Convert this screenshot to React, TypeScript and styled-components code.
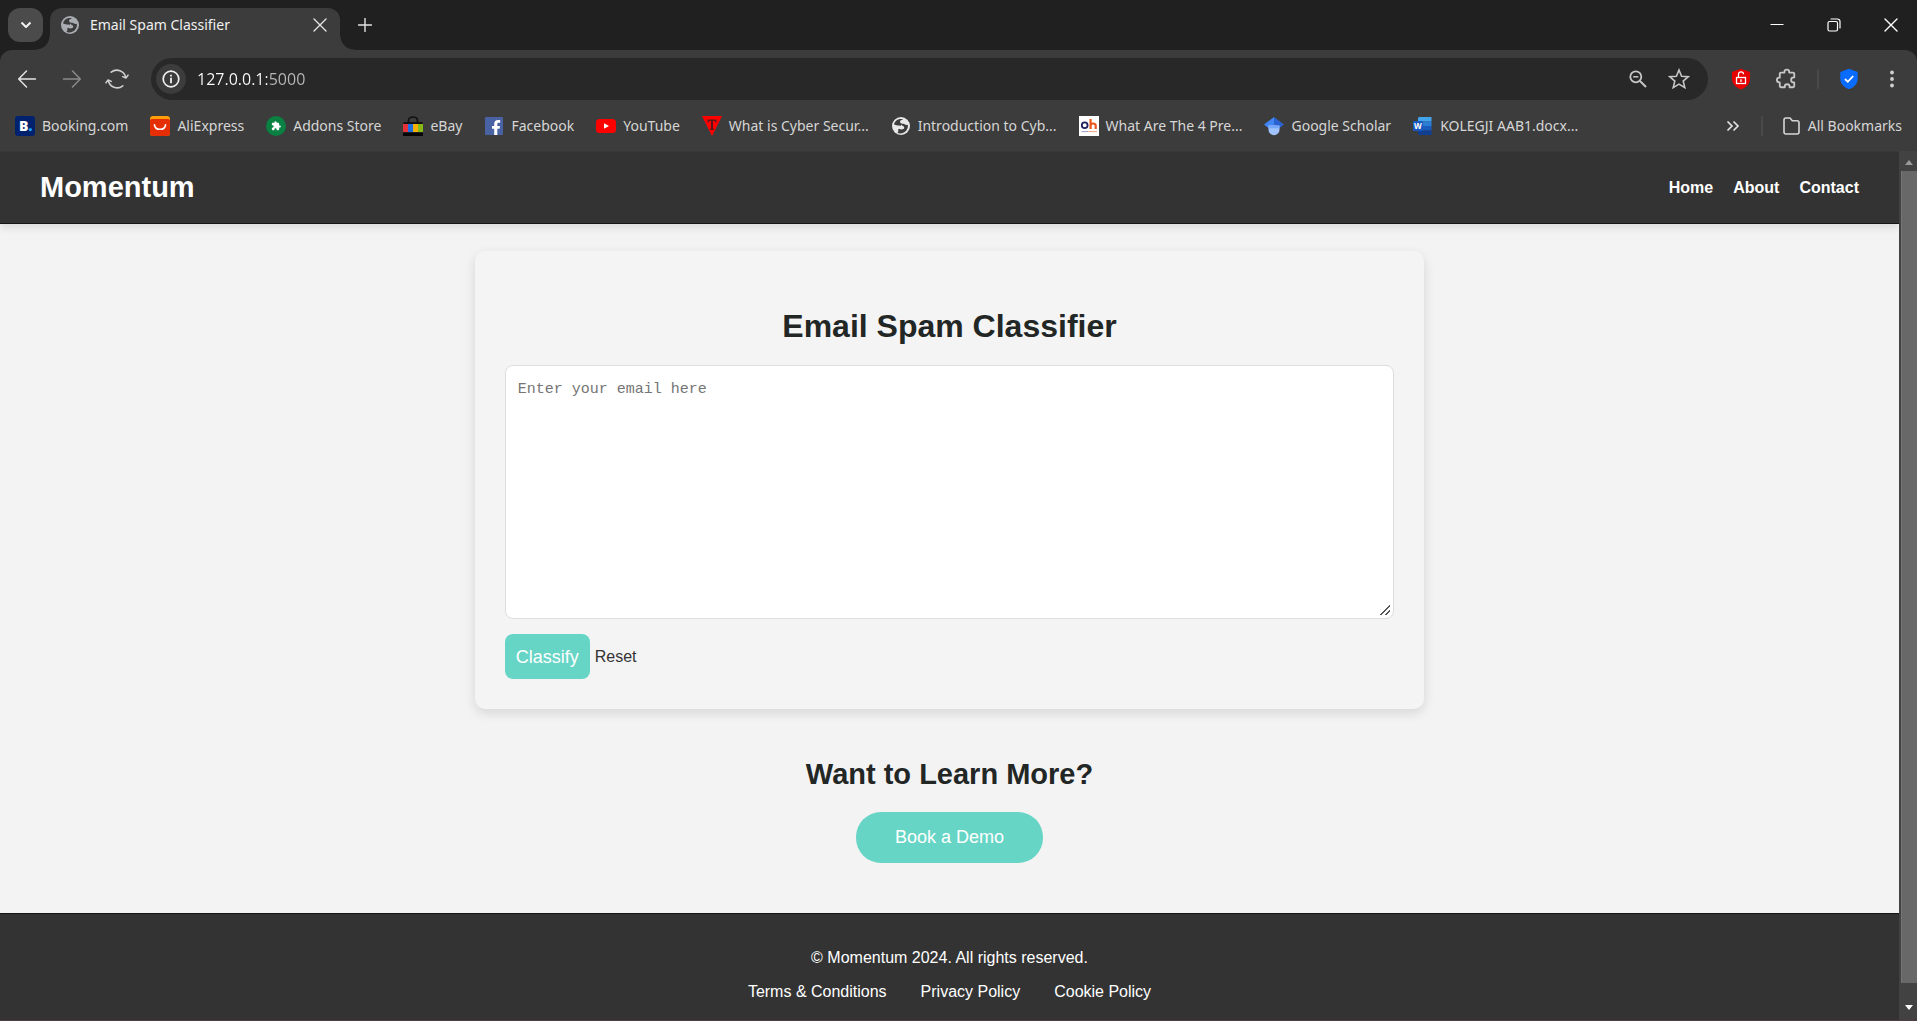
import React from "react";
import styled, { createGlobalStyle } from "styled-components";

const UI_FONT = `"Noto Sans", "Open Sans", sans-serif`;
const PAGE_FONT = `"Liberation Sans", Arial, sans-serif`;

const GlobalStyle = createGlobalStyle`
  *, *::before, *::after { box-sizing: border-box; }
  body { margin: 0; background: #202020; }
  button, input, textarea { margin: 0; }
  a { color: inherit; text-decoration: none; }
  svg { display: block; flex: none; }
`;

/* ---------- browser frame ---------- */

const Window = styled.div`
  height: 100vh;
  display: flex;
  flex-direction: column;
  background: #202020;
  border-bottom: 1px solid #513c41;
  font-family: ${UI_FONT};
  overflow: hidden;
`;

const TabStrip = styled.div`
  flex: none;
  height: 50px;
  padding: 8px 0 0 8px;
  display: flex;
  align-items: flex-start;
`;

const TabSearch = styled.button`
  width: 35px;
  height: 34px;
  padding: 0;
  border: 0;
  border-radius: 12px;
  background: #4b4b4b;
  color: #f2f2f2;
  display: grid;
  place-items: center;
`;

const Tab = styled.div`
  position: relative;
  width: 290px;
  height: 42px;
  margin-left: 7px;
  padding: 0 12px 8px 10px;
  border-radius: 12px 12px 0 0;
  background: #3c3c3c;
  color: #f0f0f0;
  display: flex;
  align-items: center;
  gap: 10px;

  &::before,
  &::after {
    content: "";
    position: absolute;
    bottom: 0;
    width: 14px;
    height: 14px;
  }
  &::before {
    right: 100%;
    background: radial-gradient(circle at 0 0, transparent 13px, #3c3c3c 14px);
  }
  &::after {
    left: 100%;
    background: radial-gradient(circle at 100% 0, transparent 13px, #3c3c3c 14px);
  }
`;

const TabTitle = styled.span`
  flex: 1;
  font-size: 14px;
  line-height: 20px;
  white-space: nowrap;
`;

const FlatButton = styled.button<{ $width: number; $tone?: string }>`
  flex: none;
  width: ${(p) => p.$width}px;
  height: 34px;
  padding: 0;
  border: 0;
  background: transparent;
  color: ${(p) => p.$tone ?? "#e3e3e3"};
  display: grid;
  place-items: center;
`;

const WindowControls = styled.div`
  margin-left: auto;
  display: flex;
  gap: 5px;
`;

const Toolbar = styled.div`
  flex: none;
  height: 58px;
  padding: 0 8px;
  border-radius: 12px 12px 0 0;
  background: #3c3c3c;
  display: flex;
  align-items: center;
`;

const NavButtons = styled.div`
  display: flex;
  gap: 7px;
`;

const Omnibox = styled.div`
  flex: 1;
  height: 42px;
  margin: 0 14px 0 15px;
  padding: 0 10px 0 5px;
  border-radius: 21px;
  background: #282828;
  display: flex;
  align-items: center;
  gap: 3px;
`;

const SiteInfo = styled.button`
  width: 30px;
  height: 30px;
  padding: 0;
  border: 0;
  border-radius: 50%;
  background: #3c3c3c;
  color: #f0f0f0;
  display: grid;
  place-items: center;
`;

const Address = styled.input`
  flex: 1;
  min-width: 0;
  padding: 0 8px;
  border: 0;
  outline: 0;
  background: linear-gradient(90deg, #ffffff 78px, #b9b9b9 78px);
  background-clip: text;
  -webkit-background-clip: text;
  -webkit-text-fill-color: transparent;
  color: #ffffff;
  font-family: "Open Sans", "Noto Sans", sans-serif;
  font-size: 16px;
  line-height: 24px;
`;

const Extensions = styled.div`
  display: flex;
  align-items: center;
  gap: 7px;
`;

const Divider = styled.span<{ $after?: number }>`
  width: 2px;
  height: 20px;
  margin: 0 ${(p) => p.$after ?? 4}px 0 5px;
  border-radius: 1px;
  background: #4a4a4a;
`;

const BookmarksBar = styled.nav`
  flex: none;
  height: 43px;
  padding: 0 15px 8px;
  background: #3c3c3c;
  color: #d6d6d6;
  display: flex;
  align-items: center;
`;

const BookmarkList = styled.div`
  display: flex;
  gap: 22px;
`;

const Bookmark = styled.a`
  display: flex;
  align-items: center;
  gap: 7px;
  font-size: 14px;
  line-height: 20px;
  white-space: nowrap;
`;

const BookmarkTail = styled.div`
  margin-left: auto;
  display: flex;
  align-items: center;
  gap: 9px;
`;

/* ---------- web page ---------- */

const Viewport = styled.div`
  flex: 1;
  min-height: 0;
  display: flex;
`;

const Page = styled.div`
  flex: 1;
  min-width: 0;
  overflow: hidden;
  background: #f3f3f3;
  color: #333333;
  font-family: ${PAGE_FONT};
  font-size: 16px;
  line-height: 18px;
`;

const SiteHeader = styled.header`
  height: 73px;
  padding: 0 40px;
  border-top: 1px solid #383838;
  border-bottom: 1px solid #161616;
  background: #333333;
  box-shadow: 0 4px 8px rgba(0, 0, 0, 0.1);
  color: #ffffff;
  display: flex;
  align-items: center;
  justify-content: space-between;
`;

const Brand = styled.a`
  font-size: 29px;
  line-height: 34px;
  font-weight: 700;
  padding-bottom: 2px;
`;

const SiteNav = styled.nav`
  display: flex;
  gap: 20px;
  font-weight: 700;
`;

const Card = styled.main`
  width: 50%;
  margin: 27px auto 0;
  padding: 30px;
  border-radius: 10px;
  background: #f4f4f4;
  box-shadow: 0 4px 12px rgba(0, 0, 0, 0.12);
`;

const CardTitle = styled.h1`
  margin: 27px 0 20px;
  color: #222625;
  font-size: 32px;
  line-height: 37px;
  font-weight: 700;
  text-align: center;
`;

const EmailBox = styled.textarea`
  display: block;
  width: 100%;
  height: 254px;
  padding: 14px 12px;
  border: 1px solid #dddddd;
  border-radius: 8px;
  background: #ffffff;
  color: #333333;
  font-family: "Liberation Mono", monospace;
  font-size: 15px;
  line-height: 20px;
  resize: vertical;

  &::placeholder {
    color: #757575;
  }
  &::-webkit-resizer {
    background: linear-gradient(
        135deg,
        transparent 46%,
        #555555 46%,
        #555555 55%,
        transparent 55%,
        transparent 73%,
        #555555 73%,
        #555555 82%,
        transparent 82%
      )
      2px 2px / 10px 10px no-repeat;
  }
`;

const Actions = styled.div`
  margin-top: 15px;
  display: flex;
  align-items: center;
  gap: 5px;
`;

const ClassifyButton = styled.button`
  height: 45px;
  padding: 0 11px;
  border: 0;
  border-radius: 8px;
  background: #66d5c5;
  color: #ffffff;
  font-family: ${PAGE_FONT};
  font-size: 18px;
  line-height: 20px;
`;

const LearnMore = styled.section`
  padding: 49px 20px 50px;
  display: flex;
  flex-direction: column;
  align-items: center;
  gap: 21px;
`;

const LearnTitle = styled.h2`
  margin: 0;
  color: #222625;
  font-size: 29px;
  line-height: 33px;
  font-weight: 700;
`;

const DemoLink = styled.a`
  padding: 15px 39px;
  border-radius: 25px;
  background: #66d5c5;
  color: #ffffff;
  font-size: 18px;
  line-height: 21px;
`;

const SiteFooter = styled.footer`
  padding: 35px 20px 30px;
  border-top: 1px solid #161616;
  background: #333333;
  color: #ffffff;
  display: flex;
  flex-direction: column;
  align-items: center;
  gap: 16px;
`;

const Copyright = styled.p`
  margin: 0;
`;

const FooterLinks = styled.div`
  display: flex;
  gap: 34px;
`;

const ScrollTrack = styled.div`
  flex: none;
  width: 18px;
  padding-left: 2px;
  background: #424242;
  display: flex;
  flex-direction: column;
`;

const ScrollArrow = styled.span<{ $height: number; $inset: number }>`
  height: ${(p) => p.$height}px;
  padding-top: ${(p) => p.$inset}px;
  color: #9a9a9a;
  display: grid;
  place-items: center;
`;

const ScrollThumb = styled.div`
  flex: 1;
  border-left: 1px solid #757575;
  background: #686868;
`;

/* ---------- icons ---------- */

const line = { fill: "none", stroke: "currentColor", strokeLinecap: "round", strokeLinejoin: "round" } as const;

const GlobeIcon = ({ tone = "#e8e8e8" }: { tone?: string }) => (
  <svg width="20" height="20" viewBox="0 0 20 20">
    <circle cx="10" cy="10" r="9" fill={tone} />
    <path
      d="M11.500 3.200C7.500 2.200 4 4.600 3 8.300c1.200.8 2.400 1.200 4.200 1.100 1.800 0 2.900.5 3 1.800 0 1.100-.6 1.600-1.700 1.700l-1.200.1v2.600c0 .8-.5 1.200-1.200 1.100 3.200 1.500 6.600.6 8.800-1.700 1.700-1.900 2.300-4 1.900-6.300-1.100.4-2 .4-2.700-.2-.7-.7-1.300-.8-2.500-.8-1.600 0-2.500-.7-2.500-1.900 0-1 .6-1.600 1.700-1.800.8-.1 1-.4.7-.8z"
      fill="#3c3c3c"
    />
    <path d="M10.500 8.500c.6 1.600 2.100 1.300 2.600 2.500.4 1.100-.2 1.900-1.500 2.200l-2.300.4-.8-2.400z" fill={tone} />
  </svg>
);

const BookingIcon = () => (
  <svg width="20" height="20" viewBox="0 0 20 20">
    <rect width="20" height="20" rx="3" fill="#00226e" />
    <text x="4" y="15" fontFamily="Open Sans" fontWeight="800" fontSize="14" fill="#ffffff">B</text>
    <circle cx="15.300" cy="13.600" r="1.600" fill="#18a4f2" />
  </svg>
);

const AliIcon = () => (
  <svg width="20" height="20" viewBox="0 0 20 20">
    <rect width="20" height="20" rx="3" fill="#ff9d0a" />
    <path d="M0 5a2 2 0 0 1 2-2h16a2 2 0 0 1 2 2v12a3 3 0 0 1-3 3H3a3 3 0 0 1-3-3z" fill="#e62e04" />
    <path d="M4.500 8.800c.6 6 10.400 6 11 0" fill="none" stroke="#ffffff" strokeWidth="1.600" strokeLinecap="round" />
  </svg>
);

const PUZZLE =
  "M20.500 11H19V7c0-1.100-.9-2-2-2h-4V3.500a2.500 2.500 0 0 0-5 0V5H4c-1.100 0-2 .9-2 2v3.800h1.500a2.700 2.700 0 0 1 0 5.400H2V20c0 1.100.9 2 2 2h3.800v-1.500a2.700 2.700 0 0 1 5.400 0V22H17c1.100 0 2-.9 2-2v-4h1.500a2.500 2.500 0 0 0 0-5z";

const AddonsIcon = () => (
  <svg width="20" height="20" viewBox="0 0 20 20">
    <circle cx="10" cy="10" r="10" fill="#0b8043" />
    <path d={PUZZLE} fill="#ffffff" transform="translate(5 4.700) scale(.43)" />
  </svg>
);

const EbayIcon = () => (
  <svg width="20" height="20" viewBox="0 0 20 20">
    <path d="M5.500 8V4.500a4.500 3.500 0 0 1 9 0V8" fill="none" stroke="#111111" strokeWidth="1.700" />
    <path d="M1 6h18l1 2H0z" fill="#111111" />
    <path d="M0 8h5v8H0z" fill="#e53238" />
    <path d="M5 8h5v8H5z" fill="#1d6fe0" />
    <path d="M10 8h5v8h-5z" fill="#f5af02" />
    <path d="M15 8h5v8h-5z" fill="#86b817" />
    <path d="M0 16.500h20V20H0z" fill="#050505" />
  </svg>
);

const FacebookIcon = () => (
  <svg width="20" height="20" viewBox="0 0 20 20">
    <rect x="1" y="1" width="18" height="18" rx="1" fill="#4862a3" />
    <path d="M10.200 19v-6.300H8V9.900h2.200V8c0-2.600 1.500-4 3.900-4 .9 0 1.700.1 2.100.2v2.500h-1.500c-1.200 0-1.400.6-1.400 1.500v1.700H16l-.4 2.800h-2.300V19z" fill="#ffffff" />
  </svg>
);

const YoutubeIcon = () => (
  <svg width="20" height="20" viewBox="0 0 20 20">
    <rect y="3" width="20" height="14" rx="3.500" fill="#ff0000" />
    <path d="M8 7.200v5.600l5-2.800z" fill="#ffffff" />
  </svg>
);

const TriangleIcon = () => (
  <svg width="20" height="20" viewBox="0 0 20 20">
    <path d="M0 0h20L10 20z" fill="#ff0000" />
    <path d="M5.500 3.500h9v3h-1l-.5-1.500h-2v7.500l1 .5v1H8v-1l1-.5V5H7l-.5 1.500h-1z" fill="#5c1414" />
  </svg>
);

const OhIcon = () => (
  <svg width="20" height="20" viewBox="0 0 20 20">
    <rect width="20" height="20" fill="#ffffff" />
    <circle cx="5.700" cy="9.300" r="2.900" fill="none" stroke="#1e2160" strokeWidth="1.800" />
    <path d="M11.600 3v10M11.600 9.600c.3-2.600 5.100-3 5.100.2V13" fill="none" stroke="#e8571c" strokeWidth="2.200" />
    <path d="M2.500 15.600h7" stroke="#9a9ac0" strokeWidth="1" />
    <path d="M9.500 15.600H18" stroke="#f0a27c" strokeWidth="1" />
  </svg>
);

const ScholarIcon = () => (
  <svg width="20" height="20" viewBox="0 0 20 20">
    <path d="M10 1 0 8.500 5 12.500l5-2z" fill="#4285f4" />
    <path d="m10 1 10 7.500-5 4-5-2z" fill="#2a62d0" />
    <path d="M4.500 9.500h11v4.200a5.500 5.500 0 0 1-11 0z" fill="#a0c3ff" />
    <path d="M4.500 12.300C5.500 8 14.500 8 15.500 12.300z" fill="#76a7fa" />
  </svg>
);

const WordIcon = () => (
  <svg width="20" height="20" viewBox="0 0 20 20">
    <path d="M6 1h12.500v4.500H5V2z" fill="#41a5ee" />
    <path d="M5 5.500h13.500V10H5z" fill="#2b7cd3" />
    <path d="M5 10h13.500v4.500H5z" fill="#185abd" />
    <path d="M5 14.500h13.500V19H6l-1-1z" fill="#103f91" />
    <rect y="5" width="10" height="10" rx="1" fill="#185abd" />
    <text x="1" y="13" fontFamily="Open Sans" fontWeight="700" fontSize="8" fill="#ffffff">W</text>
  </svg>
);

const ChevronIcon = () => (
  <svg width="14" height="14" viewBox="0 0 14 14"><path {...line} strokeWidth="2" strokeLinecap="butt" d="M2.500 4.500 7 9l4.500-4.500" /></svg>
);
const CrossIcon = () => (
  <svg width="14" height="14" viewBox="0 0 14 14"><path {...line} strokeWidth="1.400" d="m1 1 12 12M13 1 1 13" /></svg>
);
const PlusIcon = () => (
  <svg width="14" height="14" viewBox="0 0 14 14"><path {...line} strokeWidth="1.400" d="M7 .5v13M.5 7h13" /></svg>
);
const MinimizeIcon = () => (
  <svg width="14" height="14" viewBox="0 0 14 14"><path d="M.5 6h13v1H.5z" fill="currentColor" /></svg>
);
const RestoreIcon = () => (
  <svg width="14" height="14" viewBox="0 0 14 14">
    <rect {...line} x="1" y="3.500" width="9.500" height="9.500" rx="1.500" strokeWidth="1.200" />
    <path {...line} strokeWidth="1.200" d="M4 1h6.500A2.500 2.500 0 0 1 13 3.500V10" />
  </svg>
);
const BackIcon = () => (
  <svg width="20" height="20" viewBox="0 0 20 20"><path {...line} strokeWidth="1.500" d="M18.500 10H2M9.500 2 1.700 10l7.800 8" /></svg>
);
const ForwardIcon = () => (
  <svg width="20" height="20" viewBox="0 0 20 20"><path {...line} strokeWidth="1.500" d="M1.500 10H18m-7.500-8 7.800 8-7.800 8" /></svg>
);
const ReloadIcon = () => (
  <svg width="24" height="22" viewBox="0 0 24 22">
    <path {...line} strokeWidth="1.500" d="M6.200 4.200a9 9 0 0 1 14.500 5.300M23 7.200l-2.100 2.900-3.200-1.500M17.800 17.800A9 9 0 0 1 3.300 12.500M1 14.800l2.100-2.900 3.200 1.500" />
  </svg>
);
const InfoIcon = () => (
  <svg width="18" height="18" viewBox="0 0 18 18">
    <circle {...line} cx="9" cy="9" r="7.800" strokeWidth="1.700" />
    <path d="M8.100 4.700h1.800v1.900H8.100zM8.100 7.800h1.800v5.400H8.100z" fill="currentColor" />
  </svg>
);
const ZoomOutIcon = () => (
  <svg width="18" height="18" viewBox="0 0 18 18">
    <circle {...line} cx="6.800" cy="6.800" r="5.500" strokeWidth="1.800" />
    <path {...line} strokeWidth="2" strokeLinecap="butt" d="m11 11 6 6" />
    <path {...line} strokeWidth="1.500" strokeLinecap="butt" d="M4.200 6.800h5.200" />
  </svg>
);
const StarIcon = () => (
  <svg width="22" height="22" viewBox="0 0 22 22">
    <path {...line} strokeWidth="1.600" strokeLinejoin="miter" d="m11 2 2.600 6.200 6.700.5-5.100 4.400 1.600 6.500L11 16.100l-5.800 3.500 1.600-6.500-5.100-4.400 6.700-.5z" />
  </svg>
);
const LockShieldIcon = () => (
  <svg width="20" height="22" viewBox="0 0 20 22">
    <path d="M10 .8 19 4v7c0 5-4 8.500-9 10.500C5 19.500 1 16 1 11V4z" fill="#e60000" />
    <rect x="5.500" y="9.500" width="9" height="6" fill="none" stroke="#ffffff" strokeWidth="1.300" />
    <path d="M7.500 9.500V6.300a2.500 2.500 0 0 1 5 0M10 11.300v2.600" fill="none" stroke="#ffffff" strokeWidth="1.300" />
  </svg>
);
const PuzzleIcon = () => (
  <svg width="22" height="22" viewBox="0 0 24 24">
    <path
      {...line}
      strokeWidth="2"
      d="M6.500 5h3.800V4.300a2.600 2.600 0 0 1 5.200 0V5h4.200c.8 0 1.300.5 1.300 1.300v4h-.7a2.700 2.700 0 0 0 0 5.400h.7v4c0 .8-.5 1.300-1.300 1.300h-3.800v-.7a2.600 2.600 0 0 0-5.200 0v.7H6.500c-.8 0-1.300-.5-1.300-1.300v-4h-.5a2.500 2.500 0 0 1 0-5.200h.5V6.300c0-.8.5-1.300 1.300-1.300z"
    />
  </svg>
);
const CheckShieldIcon = () => (
  <svg width="20" height="22" viewBox="0 0 20 22">
    <path d="M10 .8 18.700 4v7c0 5-4 8.500-8.700 10.300C5.300 19.500 1.300 16 1.300 11V4z" fill="#0a6cff" />
    <path d="m6 11 2.800 2.800L14.200 8" fill="none" stroke="#ffffff" strokeWidth="1.800" />
  </svg>
);
const DotsIcon = () => (
  <svg width="6" height="18" viewBox="0 0 6 18">
    {[2.5, 9, 15.5].map((y) => <circle key={y} cx="3" cy={y} r="1.900" fill="currentColor" />)}
  </svg>
);
const MoreIcon = () => (
  <svg width="14" height="12" viewBox="0 0 14 12"><path {...line} strokeWidth="1.700" strokeLinecap="butt" strokeLinejoin="miter" d="m1.500 1.500 4.500 4.500-4.500 4.500M7.500 1.500 12 6l-4.500 4.500" /></svg>
);
const FolderIcon = () => (
  <svg width="18" height="20" viewBox="0 0 18 20">
    <path {...line} strokeWidth="1.600" d="M3 2h4l2.300 2.700H14c1.200 0 2 .8 2 2V16c0 1.200-.8 2-2 2H3c-1.200 0-2-.8-2-2V4c0-1.200.8-2 2-2z" />
  </svg>
);
const ArrowUp = () => (
  <svg width="8" height="5" viewBox="0 0 8 5"><path d="M0 5 4 0l4 5z" fill="currentColor" /></svg>
);
const ArrowDown = () => (
  <svg width="8" height="5" viewBox="0 0 8 5"><path d="M0 0h8L4 5z" fill="#ffffff" /></svg>
);

/* ---------- data ---------- */

const bookmarks = [
  { label: "Booking.com", icon: <BookingIcon /> },
  { label: "AliExpress", icon: <AliIcon /> },
  { label: "Addons Store", icon: <AddonsIcon /> },
  { label: "eBay", icon: <EbayIcon /> },
  { label: "Facebook", icon: <FacebookIcon /> },
  { label: "YouTube", icon: <YoutubeIcon /> },
  { label: "What is Cyber Secur...", icon: <TriangleIcon /> },
  { label: "Introduction to Cyb...", icon: <GlobeIcon /> },
  { label: "What Are The 4 Pre...", icon: <OhIcon /> },
  { label: "Google Scholar", icon: <ScholarIcon /> },
  { label: "KOLEGJI AAB1.docx...", icon: <WordIcon /> },
];

const navLinks = ["Home", "About", "Contact"];
const footerLinks = ["Terms & Conditions", "Privacy Policy", "Cookie Policy"];

/* ---------- app ---------- */

const BrowserChrome = () => (
  <>
    <TabStrip>
      <TabSearch aria-label="Search tabs"><ChevronIcon /></TabSearch>
      <Tab>
        <GlobeIcon tone="#a9adb2" />
        <TabTitle>Email Spam Classifier</TabTitle>
        <FlatButton $width={16} aria-label="Close tab"><CrossIcon /></FlatButton>
      </Tab>
      <FlatButton $width={50} aria-label="New tab"><PlusIcon /></FlatButton>
      <WindowControls>
        <FlatButton $width={52} $tone="#ffffff" aria-label="Minimize"><MinimizeIcon /></FlatButton>
        <FlatButton $width={52} $tone="#ffffff" aria-label="Restore"><RestoreIcon /></FlatButton>
        <FlatButton $width={52} $tone="#ffffff" aria-label="Close"><CrossIcon /></FlatButton>
      </WindowControls>
    </TabStrip>
    <Toolbar>
      <NavButtons>
        <FlatButton $width={38} aria-label="Back"><BackIcon /></FlatButton>
        <FlatButton $width={38} $tone="#8a8a8a" aria-label="Forward"><ForwardIcon /></FlatButton>
        <FlatButton $width={38} $tone="#d0d0d0" aria-label="Reload"><ReloadIcon /></FlatButton>
      </NavButtons>
      <Omnibox>
        <SiteInfo aria-label="View site information"><InfoIcon /></SiteInfo>
        <Address aria-label="Address" defaultValue="127.0.0.1:5000" spellCheck={false} />
        <FlatButton $width={38} $tone="#c7c7c7" aria-label="Zoom"><ZoomOutIcon /></FlatButton>
        <FlatButton $width={38} $tone="#c7c7c7" aria-label="Bookmark this tab"><StarIcon /></FlatButton>
      </Omnibox>
      <Extensions>
        <FlatButton $width={38} aria-label="Unlocker"><LockShieldIcon /></FlatButton>
        <FlatButton $width={38} $tone="#c7c7c7" aria-label="Extensions"><PuzzleIcon /></FlatButton>
        <Divider />
        <FlatButton $width={38} aria-label="Protection"><CheckShieldIcon /></FlatButton>
        <FlatButton $width={34} $tone="#d0d0d0" aria-label="Menu"><DotsIcon /></FlatButton>
      </Extensions>
    </Toolbar>
    <BookmarksBar aria-label="Bookmarks">
      <BookmarkList>
        {bookmarks.map((b) => (
          <Bookmark key={b.label} href="#">{b.icon}{b.label}</Bookmark>
        ))}
      </BookmarkList>
      <BookmarkTail>
        <FlatButton $width={28} aria-label="More bookmarks"><MoreIcon /></FlatButton>
        <Divider $after={11} />
        <Bookmark href="#"><FolderIcon />All Bookmarks</Bookmark>
      </BookmarkTail>
    </BookmarksBar>
  </>
);

export default function App() {
  return (
    <Window>
      <GlobalStyle />
      <BrowserChrome />
      <Viewport>
        <Page>
          <SiteHeader>
            <Brand href="#">Momentum</Brand>
            <SiteNav>
              {navLinks.map((label) => <a key={label} href="#">{label}</a>)}
            </SiteNav>
          </SiteHeader>
          <Card>
            <CardTitle>Email Spam Classifier</CardTitle>
            <form onSubmit={(e) => e.preventDefault()}>
              <EmailBox aria-label="Email text" placeholder="Enter your email here" />
              <Actions>
                <ClassifyButton type="submit">Classify</ClassifyButton>
                <a href="#">Reset</a>
              </Actions>
            </form>
          </Card>
          <LearnMore>
            <LearnTitle>Want to Learn More?</LearnTitle>
            <DemoLink href="#">Book a Demo</DemoLink>
          </LearnMore>
          <SiteFooter>
            <Copyright>© Momentum 2024. All rights reserved.</Copyright>
            <FooterLinks>
              {footerLinks.map((label) => <a key={label} href="#">{label}</a>)}
            </FooterLinks>
          </SiteFooter>
        </Page>
        <ScrollTrack>
          <ScrollArrow $height={20} $inset={3}><ArrowUp /></ScrollArrow>
          <ScrollThumb />
          <ScrollArrow $height={37} $inset={12}><ArrowDown /></ScrollArrow>
        </ScrollTrack>
      </Viewport>
    </Window>
  );
}
